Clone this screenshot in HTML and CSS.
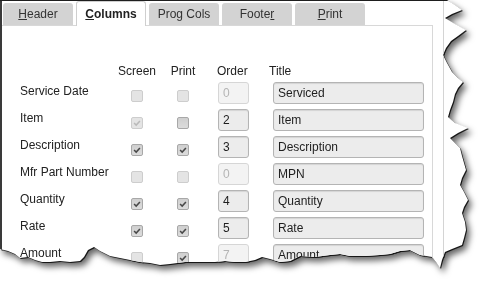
FILE: index.html
```html
<!DOCTYPE html>
<html lang="en">
<head>
    <meta charset="UTF-8">
    <title>Columns</title>
    <link rel="stylesheet" href="styles.css">
</head>
<body>
    <div class="sheet">
        <div class="page">
            <div class="window">
                <div class="tabs">
                    <span class="tab"><u>H</u>eader</span>
                    <span class="tab active"><u>C</u>olumns</span>
                    <span class="tab">Pro<u>g</u> Cols</span>
                    <span class="tab">Foote<u>r</u></span>
                    <span class="tab"><u>P</u>rint</span>
                </div>
                <div class="panel">
                    <div class="grid">
                        <span class="head"></span>
                        <span class="head mid">Screen</span>
                        <span class="head mid">Print</span>
                        <span class="head order-h">Order</span>
                        <span class="head title-h">Title</span>

                        <span class="label">Service Date</span>
                        <span class="cell"><span class="cb off"></span></span>
                        <span class="cell"><span class="cb off"></span></span>
                        <input class="num" value="0" disabled>
                        <input class="title" value="Serviced">

                        <span class="label">Item</span>
                        <span class="cell"><span class="cb off"><svg viewBox="0 0 12 12"><path d="M2.5 6 L5 8.5 L9.5 3.5"/></svg></span></span>
                        <span class="cell"><span class="cb"></span></span>
                        <input class="num" value="2">
                        <input class="title" value="Item">

                        <span class="label">Description</span>
                        <span class="cell"><span class="cb"><svg viewBox="0 0 12 12"><path d="M2.5 6 L5 8.5 L9.5 3.5"/></svg></span></span>
                        <span class="cell"><span class="cb"><svg viewBox="0 0 12 12"><path d="M2.5 6 L5 8.5 L9.5 3.5"/></svg></span></span>
                        <input class="num" value="3">
                        <input class="title" value="Description">

                        <span class="label">Mfr Part Number</span>
                        <span class="cell"><span class="cb off"></span></span>
                        <span class="cell"><span class="cb off"></span></span>
                        <input class="num" value="0" disabled>
                        <input class="title" value="MPN">

                        <span class="label">Quantity</span>
                        <span class="cell"><span class="cb"><svg viewBox="0 0 12 12"><path d="M2.5 6 L5 8.5 L9.5 3.5"/></svg></span></span>
                        <span class="cell"><span class="cb"><svg viewBox="0 0 12 12"><path d="M2.5 6 L5 8.5 L9.5 3.5"/></svg></span></span>
                        <input class="num" value="4">
                        <input class="title" value="Quantity">

                        <span class="label">Rate</span>
                        <span class="cell"><span class="cb"><svg viewBox="0 0 12 12"><path d="M2.5 6 L5 8.5 L9.5 3.5"/></svg></span></span>
                        <span class="cell"><span class="cb"><svg viewBox="0 0 12 12"><path d="M2.5 6 L5 8.5 L9.5 3.5"/></svg></span></span>
                        <input class="num" value="5">
                        <input class="title" value="Rate">

                        <span class="label">Amount</span>
                        <span class="cell"><span class="cb off"></span></span>
                        <span class="cell"><span class="cb"><svg viewBox="0 0 12 12"><path d="M2.5 6 L5 8.5 L9.5 3.5"/></svg></span></span>
                        <input class="num" value="7" disabled>
                        <input class="title" value="Amount">
                    </div>
                </div>
            </div>
        </div>
    </div>
</body>
</html>
```

FILE: styles.css
```css
* {
    margin: 0;
    padding: 0;
    box-sizing: border-box;
}

body {
    background: #fff;
    font-family: "Liberation Sans", Arial, sans-serif;
    font-size: 12px;
    color: #222;
    overflow: hidden;
}

/* torn paper + shadow */
.sheet {
    width: 480px;
    height: 285px;
    filter: drop-shadow(1px 1px 0 rgba(0, 0, 0, 0.8)) drop-shadow(3px 4px 3px rgba(0, 0, 0, 0.6));
}

.page {
    width: 475px;
    height: 275px;
    background: #fff;
    border-top: 1px solid #1e1e1e;
    clip-path: polygon(0 0, 447px 0, 455px 5px, 462px 10px, 452px 14px, 445px 18px, 455px 24px, 466px 30px, 458px 36px, 451px 41px, 446px 48px, 443px 55px, 447px 63px, 452px 72px, 458px 78px, 463px 82px, 458px 88px, 455px 94px, 453px 102px, 450px 110px, 448px 117px, 455px 123px, 468px 128px, 458px 133px, 450px 138px, 456px 144px, 460px 148px, 462px 156px, 464px 163px, 466px 170px, 462px 178px, 460px 185px, 464px 192px, 468px 200px, 464px 207px, 462px 213px, 465px 222px, 466px 230px, 464px 238px, 462px 245px, 452px 249px, 445px 252px, 442px 260px, 440px 268px, 436px 262px, 432px 257px, 420px 255px, 410px 250px, 400px 251px, 390px 254px, 380px 255px, 365px 256px, 350px 256px, 340px 254px, 330px 255px, 315px 257px, 300px 256px, 290px 261px, 280px 262px, 270px 259px, 262px 257px, 255px 260px, 245px 262px, 235px 262px, 225px 261px, 215px 262px, 200px 262px, 185px 262px, 170px 264px, 160px 265px, 150px 263px, 140px 262px, 125px 259px, 110px 256px, 100px 251px, 94px 247px, 88px 250px, 84px 257px, 80px 261px, 70px 262px, 60px 261px, 50px 262px, 42px 262px, 35px 260px, 28px 257px, 20px 258px, 15px 254px, 8px 251px, 0 249px);
}

.window {
    width: 444px;
    height: 274px;
    border-left: 2px solid #3a3a3a;
    border-right: 1px solid #d4d4d4;
}

/* tabs */
.tabs {
    display: flex;
    align-items: flex-end;
    gap: 3px;
    height: 24px;
    padding-left: 1px;
    position: relative;
    z-index: 1;
}

.tab {
    width: 70px;
    height: 22px;
    line-height: 22px;
    text-align: center;
    background: #d3d3d3;
    border-radius: 3px 3px 0 0;
    color: #333;
}

.tab.active {
    height: 25px;
    margin-bottom: -1px;
    background: #fff;
    border: 1px solid #cfcfcf;
    border-bottom: none;
    font-weight: bold;
    color: #222;
    line-height: 24px;
}

.panel {
    margin-right: 10px;
    height: 250px;
    border-top: 1px solid #d8d8d8;
    border-right: 1px solid #d8d8d8;
    padding: 38px 0 0 18px;
}

/* column grid */
.grid {
    display: grid;
    grid-template-columns: 94px 46px 46px 54px 165px;
    row-gap: 5px;
    align-items: start;
}

.head {
    height: 13px;
    line-height: 14px;
    color: #222;
}

.mid {
    text-align: center;
}

.order-h {
    padding-left: 11px;
}

.title-h {
    padding-left: 9px;
}

.label {
    padding-top: 2px;
    line-height: 14px;
}

.cell {
    display: flex;
    justify-content: center;
    padding-top: 8px;
}

.cb {
    width: 12px;
    height: 12px;
    border: 1px solid #a8a8a8;
    border-radius: 2px;
    background: linear-gradient(#cfcfcf, #dcdcdc);
    display: flex;
}

.cb.off {
    border-color: #cdcdcd;
    background: #e4e4e4;
}

.cb svg {
    width: 10px;
    height: 10px;
    fill: none;
    stroke: #484848;
    stroke-width: 1.8;
}

.cb.off svg {
    stroke: #b9b9b9;
}

input {
    font-family: "Liberation Sans", Arial, sans-serif;
    font-size: 12px;
    color: #1e1e1e;
    height: 22px;
    padding-left: 4px;
    background: #ececec;
    border: 1px solid #b4b4b4;
    border-radius: 3px;
    box-shadow: inset 0 1px 1px rgba(0, 0, 0, 0.1);
    outline: none;
}

input:disabled {
    background: #f3f3f3;
    border-color: #d6d6d6;
    color: #b4b4b4;
    box-shadow: none;
}

.num {
    width: 31px;
    margin-left: 12px;
}

.title {
    width: 151px;
    margin-left: 13px;
}
```
